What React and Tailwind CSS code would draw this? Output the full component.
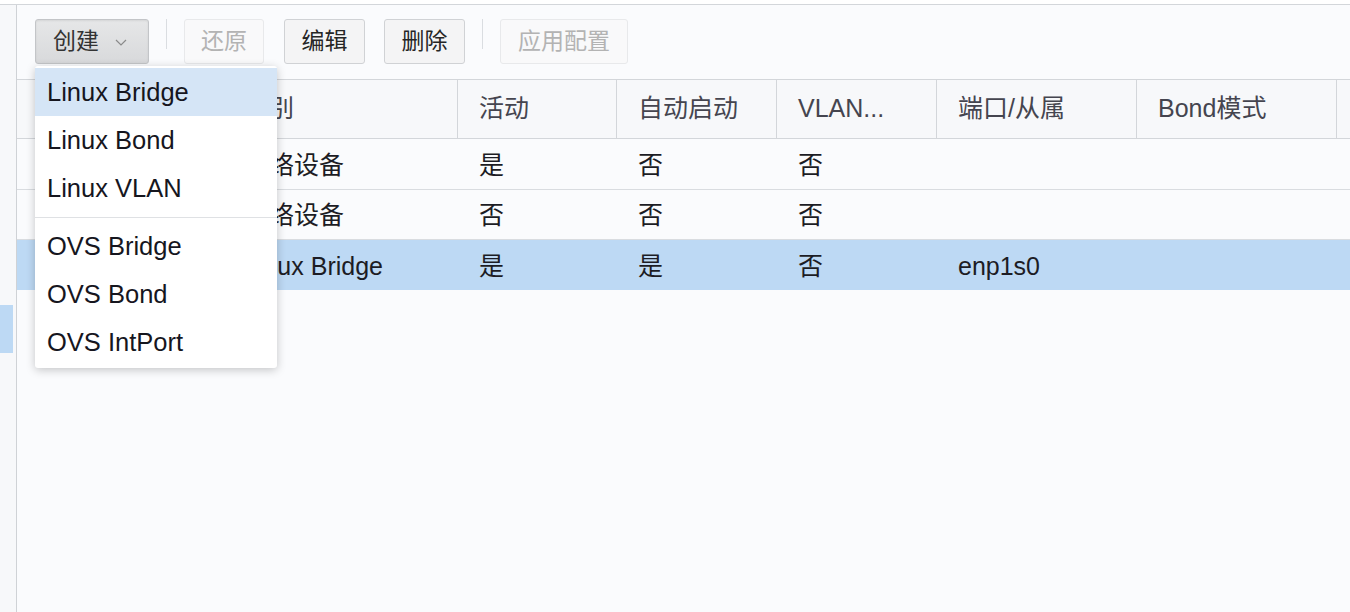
const font = "font-['Liberation_Sans','Noto_Sans_CJK_SC',sans-serif]";

// first column lies under the open menu, so its header and cells stay blank
const columns = [
  { key: "name", label: "", w: "w-[206px]" },
  { key: "type", label: "类别", w: "w-[235px]" },
  { key: "active", label: "活动", w: "w-[159px]" },
  { key: "autostart", label: "自动启动", w: "w-[160px]" },
  { key: "vlan", label: "VLAN...", w: "w-[160px]" },
  { key: "ports", label: "端口/从属", w: "w-[200px]" },
  { key: "bond", label: "Bond模式", w: "w-[200px]" },
];

const rows = [
  { id: 1, name: "", type: "网络设备", active: "是", autostart: "否", vlan: "否", ports: "", bond: "", h: "h-[51px]" },
  { id: 2, name: "", type: "网络设备", active: "否", autostart: "否", vlan: "否", ports: "", bond: "", h: "h-[50px]" },
  { id: 3, name: "", type: "Linux Bridge", active: "是", autostart: "是", vlan: "否", ports: "enp1s0", bond: "", h: "h-[50px]", selected: true },
];

const menu = [
  ["Linux Bridge", "Linux Bond", "Linux VLAN"],
  ["OVS Bridge", "OVS Bond", "OVS IntPort"],
];

const Chevron = () => (
  <svg width="12" height="7" viewBox="0 0 12 7" fill="none" className="ml-[16px] mt-[2px]">
    <path d="M1 1l5 5 5-5" stroke="#8a8a8a" strokeWidth="1.2" />
  </svg>
);

const Sep = () => <div className="w-px h-[30px] bg-[#dadde1] mx-[17px]" />;

const Btn = ({ children, disabled, w }) => (
  <button
    className={`${w} h-[45px] rounded-[3px] border text-[23px] flex items-center justify-center ${
      disabled
        ? "border-[#e8e9eb] bg-[#f9f9fa] text-[#b3b3b3]"
        : "border-[#d0d2d5] bg-[#f4f4f5] text-[#262626]"
    }`}
  >
    {children}
  </button>
);

const Toolbar = () => (
  <div className="h-[74px] flex items-start pt-[14px] pl-[18px]">
    <button className="w-[114px] h-[45px] rounded-[3px] border border-[#c3c5c8] bg-gradient-to-b from-[#e6e7e8] to-[#d8d9db] text-[23px] text-[#333] flex items-center pl-[17px] shadow-[inset_0_1px_2px_rgba(0,0,0,0.08)]">
      创建
      <Chevron />
    </button>
    <Sep />
    <Btn disabled w="w-[80px]">还原</Btn>
    <div className="w-[20px]" />
    <Btn w="w-[81px]">编辑</Btn>
    <div className="w-[19px]" />
    <Btn w="w-[81px]">删除</Btn>
    <Sep />
    <Btn disabled w="w-[128px]">应用配置</Btn>
  </div>
);

const Table = () => (
  <div className="flex flex-col">
    <div className="flex h-[60px] border-y border-[#d3d6da] bg-[#f7f8fa]">
      {columns.map((c) => (
        <div
          key={c.key}
          className={`${c.w} shrink-0 border-r border-[#d3d6da] flex items-center pl-[21px] text-[25px] text-[#45454f]`}
        >
          {c.label}
        </div>
      ))}
      <div className="flex-1" />
    </div>
    {rows.map((r) => (
      <div
        key={r.id}
        className={`flex ${r.h} ${r.selected ? "bg-[#bdd9f4]" : "border-b border-[#d9dce0]"}`}
      >
        {columns.map((c) => (
          <div
            key={c.key}
            className={`${c.w} shrink-0 flex items-center pl-[21px] pt-[3px] text-[25px] text-[#1c1c24]`}
          >
            {r[c.key]}
          </div>
        ))}
        <div className="flex-1" />
      </div>
    ))}
  </div>
);

const CreateMenu = () => (
  <div className="absolute left-[18px] top-[61px] w-[242px] bg-white rounded-[3px] py-[2px] shadow-[0_2px_10px_rgba(0,0,0,0.22)] text-[25.5px] text-[#16161e]">
    {menu.map((group, gi) => (
      <div key={gi}>
        {gi > 0 && (
          <div className="h-[10px] flex items-center">
            <div className="h-px w-full bg-[#dfe1e4]" />
          </div>
        )}
        {group.map((item, i) => (
          <div
            key={item}
            className={`h-[48px] flex items-center pl-[12px] ${gi === 0 && i === 0 ? "bg-[#d5e5f6]" : ""}`}
          >
            {item}
          </div>
        ))}
      </div>
    ))}
  </div>
);

export default function App() {
  return (
    <div className={`w-[1350px] h-[612px] bg-white flex flex-col overflow-hidden ${font}`}>
      <div className="h-[4px] shrink-0" />
      <div className="flex-1 flex border-t border-[#d3d6da]">
        <div className="w-[17px] shrink-0 border-r border-[#cfd2d6] bg-[#f7f8fa] pt-[300px]">
          <div className="w-[13px] h-[48px] bg-[#bdd9f4]" />
        </div>
        <div className="flex-1 relative bg-[#fafbfd]">
          <Toolbar />
          <Table />
          <CreateMenu />
        </div>
      </div>
    </div>
  );
}
